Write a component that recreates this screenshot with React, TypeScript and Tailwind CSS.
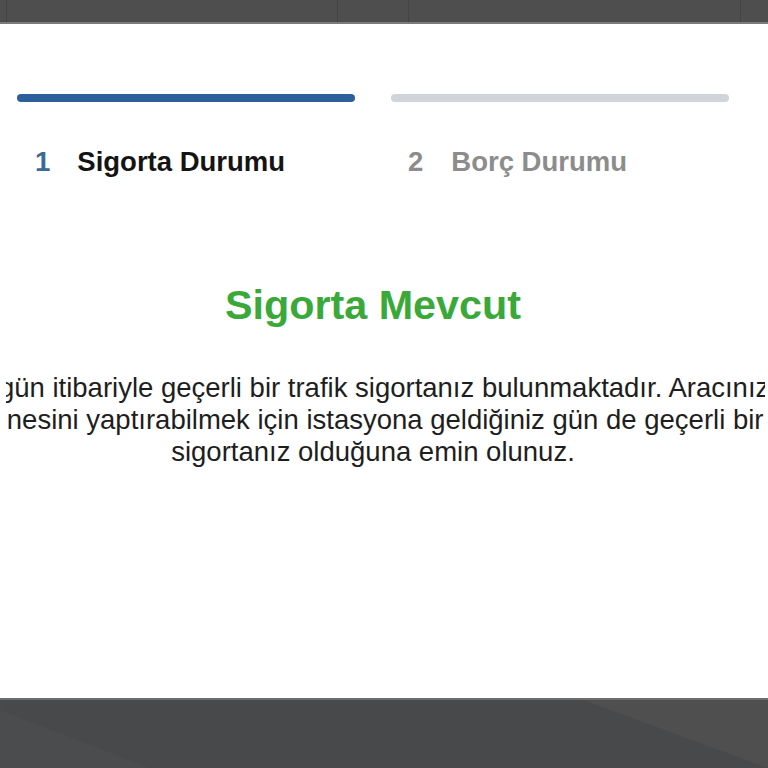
import React from "react";

export default function App() {
  const font = { fontFamily: '"Liberation Sans", Arial, sans-serif' };
  return (
    <div
      className="relative w-[768px] h-[768px] overflow-hidden bg-white flex flex-col"
      style={font}
    >
      {/* top dark bar */}
      <div className="h-[24px] shrink-0 flex bg-[#4e4e4e] border-b-[2px] border-[#7a7a7a]">
        <div className="w-[7px] border-r border-[#444]" />
        <div className="w-[331px] border-r border-[#444]" />
        <div className="w-[71px] border-r border-[#444]" />
        <div className="w-[332px] border-r border-[#444]" />
        <div className="flex-1" />
      </div>

      {/* content */}
      <div className="flex-1 flex flex-col">
        <div className="w-[746px] px-[17px] pt-[70px] flex flex-col">
          <div className="grid grid-cols-2 gap-[36px]">
            <div className="flex flex-col">
              <div className="h-[8px] rounded-full bg-[#2c5f9c]" />
              <div className="mt-[44px] pl-[18px] flex items-center gap-[27px] text-[27.5px] font-bold leading-[1.15]">
                <span className="text-[#3b6a96]">1</span>
                <span className="text-[#141414]">Sigorta Durumu</span>
              </div>
            </div>
            <div className="flex flex-col">
              <div className="h-[8px] rounded-full bg-[#d1d4d8]" />
              <div className="mt-[44px] pl-[17px] flex items-center gap-[28px] text-[27.5px] font-bold leading-[1.15]">
                <span className="text-[#8c8c8c]">2</span>
                <span className="text-[#8c8c8c]">Borç Durumu</span>
              </div>
            </div>
          </div>

          <div className="mt-[104px] text-center text-[41.3px] font-bold leading-[1.15] text-[#3aa93a]">
            Sigorta Mevcut
          </div>
        </div>

        {/* body text, clipped by its box */}
        <div className="mt-[43px] ml-[6px] w-[759px] overflow-hidden">
          <div className="w-[734px] flex flex-col items-center text-[27.5px] leading-[32px] text-[#1e1e1e]">
            <span className="whitespace-nowrap ml-[11.5px]">
              Bugün itibariyle geçerli bir trafik sigortanız bulunmaktadır. Aracınızın
            </span>
            <span className="whitespace-nowrap ml-[9px]">
              muayenesini yaptırabilmek için istasyona geldiğiniz gün de geçerli bir trafik
            </span>
            <span className="whitespace-nowrap">sigortanız olduğuna emin olunuz.</span>
          </div>
        </div>
      </div>

      {/* bottom dark area */}
      <div className="relative h-[70px] shrink-0 bg-[#48494b] border-t-[2px] border-[#6e6e6e] overflow-hidden">
        <svg className="absolute inset-0" width="768" height="68" viewBox="0 0 768 68">
          <polygon points="583,0 768,0 768,68" fill="#4f4f4f" />
          <polygon points="0,10 0,68 150,68" fill="#4b4c4e" />
        </svg>
      </div>
    </div>
  );
}
